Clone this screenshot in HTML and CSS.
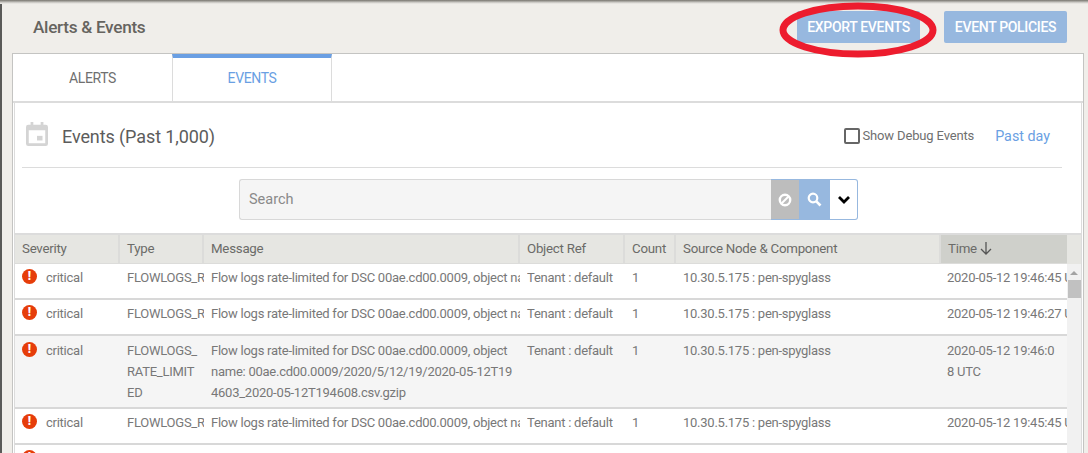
FILE: index.html
```html
<!DOCTYPE html>
<html lang="en">
<head>
    <meta charset="UTF-8">
    <title>Alerts &amp; Events</title>
    <link rel="stylesheet" href="styles.css">
</head>
<body>
    <div class="top-edge"></div>
    <div class="page">
        <div class="page-head">
            <h2>Alerts &amp; Events</h2>
            <div class="head-buttons">
                <button class="btn btn-export">EXPORT EVENTS</button>
                <button class="btn">EVENT POLICIES</button>
            </div>
            <svg class="circled" width="170" height="64" viewBox="0 0 170 64">
                <ellipse cx="85" cy="32" rx="75" ry="24" fill="none" stroke="#ed1c2e" stroke-width="7"></ellipse>
            </svg>
        </div>

        <div class="panel">
            <div class="tabs">
                <div class="tab">ALERTS</div>
                <div class="tab tab-active">EVENTS</div>
            </div>

            <div class="card">
                <div class="card-head">
                    <svg class="cal-icon" width="22" height="24" viewBox="0 0 24 26" preserveAspectRatio="none">
                        <path fill="#d4d4d4" d="M5 0h3v3h8V0h3v3h2.500A2.500 2.500 0 0 1 24 5.500V23.500A2.500 2.500 0 0 1 21.500 26H2.500A2.500 2.500 0 0 1 0 23.500V5.500A2.500 2.500 0 0 1 2.500 3H5zM3 9v14h18V9z"></path>
                        <rect x="12" y="15" width="6" height="5" fill="#d4d4d4"></rect>
                    </svg>
                    <h3>Events (Past 1,000)</h3>
                    <label class="debug"><span class="checkbox"></span>Show Debug Events</label>
                    <a class="range">Past day</a>
                </div>

                <div class="search-row">
                    <div class="search">
                        <div class="search-input">Search</div>
                        <div class="search-btn search-clear">
                            <svg width="14" height="14" viewBox="0 0 14 14"><circle cx="7" cy="7" r="5.200" fill="none" stroke="#fff" stroke-width="2.400"></circle><path d="M3.500 10.500l7-7" stroke="#fff" stroke-width="2"></path></svg>
                        </div>
                        <div class="search-btn search-go">
                            <svg width="15" height="15" viewBox="0 0 15 15"><circle cx="6" cy="6" r="4.300" fill="none" stroke="#fff" stroke-width="2.200"></circle><path d="M9.300 9.300l4.200 4.200" stroke="#fff" stroke-width="2.600"></path></svg>
                        </div>
                        <div class="search-btn search-more">
                            <svg width="14" height="10" viewBox="0 0 14 10"><path d="M2 2l5 5 5-5" fill="none" stroke="#000" stroke-width="2.800"></path></svg>
                        </div>
                    </div>
                </div>

                <div class="table-wrap">
                    <table class="events">
                        <colgroup>
                            <col class="c-sev"><col class="c-type"><col class="c-msg"><col class="c-ref"><col class="c-count"><col class="c-src"><col class="c-time">
                        </colgroup>
                        <thead>
                            <tr>
                                <th>Severity</th>
                                <th>Type</th>
                                <th>Message</th>
                                <th>Object Ref</th>
                                <th>Count</th>
                                <th>Source Node &amp; Component</th>
                                <th class="sorted">Time<svg class="sort-arrow" width="12" height="13" viewBox="0 0 12 13"><path d="M6 0v12M1 7l5 5 5-5" fill="none" stroke="#555" stroke-width="1.300"></path></svg></th>
                            </tr>
                        </thead>
                        <tbody>
                            <tr>
                                <td><div class="sev"><span class="crit">!</span>critical</div></td>
                                <td><div class="clip">FLOWLOGS_RATE_LIMITED</div></td>
                                <td><div class="clip">Flow logs rate-limited for DSC 00ae.cd00.0009, object name: 00ae.cd00.0009/2020/5/12/19</div></td>
                                <td><div class="clip">Tenant : default</div></td>
                                <td>1</td>
                                <td>10.30.5.175 : pen-spyglass</td>
                                <td><div class="clip">2020-05-12 19:46:45 UTC</div></td>
                            </tr>
                            <tr>
                                <td><div class="sev"><span class="crit">!</span>critical</div></td>
                                <td><div class="clip">FLOWLOGS_RATE_LIMITED</div></td>
                                <td><div class="clip">Flow logs rate-limited for DSC 00ae.cd00.0009, object name: 00ae.cd00.0009/2020/5/12/19</div></td>
                                <td><div class="clip">Tenant : default</div></td>
                                <td>1</td>
                                <td>10.30.5.175 : pen-spyglass</td>
                                <td><div class="clip">2020-05-12 19:46:27 UTC</div></td>
                            </tr>
                            <tr class="open">
                                <td><div class="sev"><span class="crit">!</span>critical</div></td>
                                <td>FLOWLOGS_<br>RATE_LIMIT<br>ED</td>
                                <td>Flow logs rate-limited for DSC 00ae.cd00.0009, object<br>name: 00ae.cd00.0009/2020/5/12/19/2020-05-12T19<br>4603_2020-05-12T194608.csv.gzip</td>
                                <td>Tenant : default</td>
                                <td>1</td>
                                <td>10.30.5.175 : pen-spyglass</td>
                                <td>2020-05-12 19:46:0<br>8 UTC</td>
                            </tr>
                            <tr>
                                <td><div class="sev"><span class="crit">!</span>critical</div></td>
                                <td><div class="clip">FLOWLOGS_RATE_LIMITED</div></td>
                                <td><div class="clip">Flow logs rate-limited for DSC 00ae.cd00.0009, object name: 00ae.cd00.0009/2020/5/12/19</div></td>
                                <td><div class="clip">Tenant : default</div></td>
                                <td>1</td>
                                <td>10.30.5.175 : pen-spyglass</td>
                                <td><div class="clip">2020-05-12 19:45:45 UTC</div></td>
                            </tr>
                            <tr>
                                <td><div class="sev"><span class="crit">!</span>critical</div></td>
                                <td><div class="clip">FLOWLOGS_RATE_LIMITED</div></td>
                                <td><div class="clip">Flow logs rate-limited for DSC 00ae.cd00.0009, object name: 00ae.cd00.0009/2020/5/12/19</div></td>
                                <td><div class="clip">Tenant : default</div></td>
                                <td>1</td>
                                <td>10.30.5.175 : pen-spyglass</td>
                                <td><div class="clip">2020-05-12 19:45:30 UTC</div></td>
                            </tr>
                        </tbody>
                    </table>
                    <div class="scrollbar">
                        <div class="scroll-top"></div>
                        <div class="scroll-body"><span class="scroll-up"></span><span class="scroll-thumb"></span></div>
                    </div>
                </div>
            </div>
        </div>
    </div>
</body>
</html>
```

FILE: styles.css
```css
html, body {
    margin: 0;
    height: 453px;
    overflow: hidden;
}
body {
    font-family: Roboto, Arial, sans-serif;
    background-color: #f0eeea;
    color: #6f6f6f;
}
.top-edge {
    height: 4px;
    background: linear-gradient(#77756f, #d8d6d2 70%, #f0eeea);
}
.page {
    border-left: 2px solid #5a5a58;
    padding: 0 4px 0 10px;
    height: 449px;
}
.page-head {
    position: relative;
    display: flex;
    justify-content: space-between;
    align-items: center;
    height: 49px;
    padding: 0 17px 0 21px;
}
.page-head h2 {
    margin: 0 0 3px;
    font-size: 17.200px;
    font-weight: 500;
    letter-spacing: -0.300px;
    color: #66645f;
}
.head-buttons {
    display: flex;
    gap: 24px;
    margin-top: 5px;
    margin-bottom: 8px;
}
.btn {
    width: 123px;
    height: 32px;
    padding: 0;
    border: none;
    border-radius: 2px;
    background-color: #97b8df;
    color: white;
    font-family: inherit;
    font-size: 14px;
    font-weight: 500;
    letter-spacing: -0.330px;
}
.circled {
    position: absolute;
    left: 761px;
    top: -6px;
}
.panel {
    height: 400px;
    border: 1px solid #c4c4c2;
    border-bottom: none;
    background-color: white;
    overflow: hidden;
}
.tabs {
    display: flex;
    height: 47px;
    border-bottom: 2px solid #dcdcdc;
}
.tab {
    width: 159px;
    box-sizing: border-box;
    height: 47px;
    display: flex;
    align-items: center;
    justify-content: center;
    font-size: 14px;
    color: #6f6f6f;
    letter-spacing: -0.400px;
}
.tab-active {
    width: 160px;
    border-top: 4px solid #6a9fe3;
    border-left: 1px solid #dcdcdc;
    border-right: 1px solid #dcdcdc;
    padding-bottom: 4px;
    color: #6a9fe3;
}
.card {
    margin: 0 1px;
    border-left: 1px solid #dcdcdc;
    border-right: 1px solid #dcdcdc;
    height: 350px;
}
.card-head {
    display: flex;
    align-items: center;
    height: 64px;
    margin: 0 19px 0 7px;
    padding-left: 4px;
    border-bottom: 1px solid #dcdcdc;
}
.cal-icon {
    margin-bottom: 2px;
}
.card-head h3 {
    margin: 2px 0 0 14px;
    font-size: 18px;
    font-weight: 400;
    letter-spacing: -0.100px;
    color: #5c5c5c;
    flex: 1;
}
.debug {
    display: flex;
    align-items: center;
    gap: 3px;
    margin-top: 1px;
    font-size: 13px;
    letter-spacing: -0.150px;
    color: #6f6f6f;
}
.checkbox {
    width: 12px;
    height: 12px;
    border: 2px solid #666;
    border-radius: 2px;
}
.range {
    margin: 2px 12px 0 21px;
    font-size: 14.300px;
    color: #6a9fe3;
}
.search-row {
    display: flex;
    padding: 11px 0 13px 224px;
}
.search {
    display: flex;
    width: 619px;
    height: 41px;
}
.search-input {
    flex: 1;
    display: flex;
    align-items: center;
    padding-left: 9px;
    border: 1px solid #d8d8d8;
    border-right: none;
    border-radius: 3px 0 0 3px;
    background-color: #f5f5f5;
    color: #8a8a8a;
    font-size: 14.500px;
}
.search-btn {
    display: flex;
    align-items: center;
    justify-content: center;
    box-sizing: border-box;
    border-top: 1px solid #97b8df;
    border-bottom: 1px solid #97b8df;
}
.search-clear {
    width: 28px;
    background-color: #bdbdbd;
}
.search-go {
    width: 31px;
    background-color: #97b8df;
}
.search-more {
    width: 28px;
    border-right: 1px solid #97b8df;
    border-radius: 0 3px 3px 0;
    background-color: white;
}
.table-wrap {
    display: flex;
    border-top: 2px solid #dcdcdc;
    height: 240px;
    overflow: hidden;
}
.events {
    width: 1052px;
    table-layout: fixed;
    border-collapse: separate;
    border-spacing: 0;
    font-size: 13px;
    letter-spacing: -0.250px;
}
.c-sev { width: 105px; }
.c-type { width: 84px; }
.c-msg { width: 316px; }
.c-ref { width: 105px; }
.c-count { width: 51px; }
.c-src { width: 265px; }
.c-time { width: 126px; }
.events th {
    box-sizing: border-box;
    height: 29px;
    padding: 0 0 2px 7px;
    background-color: #e6e6e2;
    border-right: 2px solid #dcdcda;
    border-bottom: 1px solid #dcdcda;
    text-align: left;
    font-weight: 400;
    font-size: 13.300px;
    color: #6b6b68;
}
.events th:last-child {
    border-right: none;
}
.events th.sorted {
    background-color: #cfd0cb;
}
.sort-arrow {
    margin-left: 3px;
    vertical-align: -2px;
}
.events td {
    box-sizing: border-box;
    height: 36px;
    padding: 3px 0 5px 7px;
    border-bottom: 2px solid #d8d8d8;
    vertical-align: top;
    line-height: 21px;
    color: #787878;
    overflow: hidden;
}
.events td:last-child {
    padding-left: 6px;
}
.open td {
    padding-top: 4px;
    padding-bottom: 4px;
    background-color: #f5f5f5;
}
.clip {
    white-space: nowrap;
    overflow: hidden;
}
.sev {
    display: flex;
    align-items: flex-start;
    gap: 9px;
}
.crit {
    width: 15px;
    height: 15px;
    margin-top: 2px;
    border-radius: 50%;
    background-color: #e63d0a;
    color: white;
    font-size: 12px;
    font-weight: 900;
    line-height: 15px;
    text-align: center;
    letter-spacing: 0;
}
.scrollbar {
    width: 16px;
    background-color: #f1f1f1;
}
.scroll-top {
    height: 29px;
    background-color: #e6e6e2;
}
.scroll-body {
    display: flex;
    flex-direction: column;
    align-items: center;
    padding-top: 7px;
}
.scroll-up {
    width: 0;
    height: 0;
    border-left: 4px solid transparent;
    border-right: 4px solid transparent;
    border-bottom: 4px solid #a3a3a3;
}
.scroll-thumb {
    width: 13px;
    height: 18px;
    margin-top: 5px;
    background-color: #c1c1c1;
}
```
